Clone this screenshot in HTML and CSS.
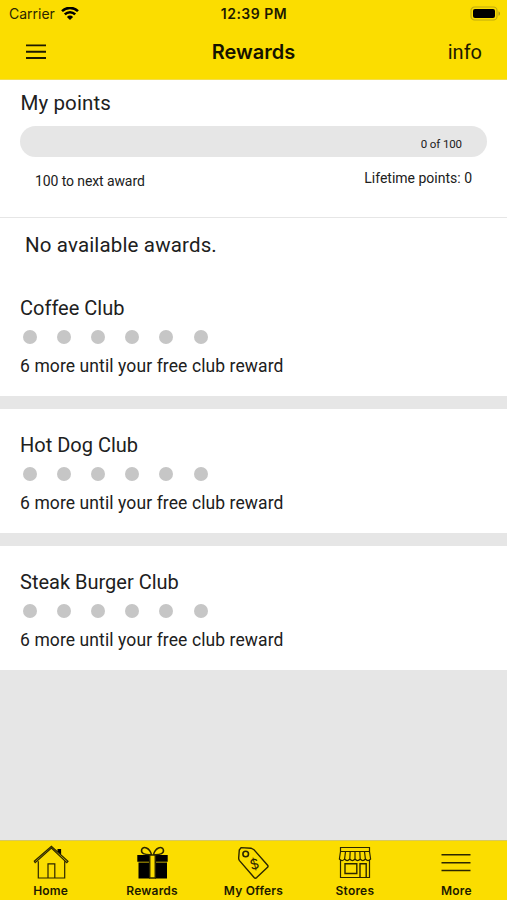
FILE: index.html
```html
<!DOCTYPE html>
<html lang="en">

<head>
    <meta charset="UTF-8">
    <meta name="viewport" content="width=device-width, initial-scale=1.0">
    <title>Rewards</title>
    <link rel="stylesheet" href="styles.css">
</head>

<body>

    <header class="header">
        <div class="status-bar">
            <div class="carrier">
                <span>Carrier</span>
                <svg width="18" height="14" viewBox="0 0 18 14">
                    <path d="M1 4.2a11.3 11.3 0 0 1 16 0M3.8 7.4a7.3 7.3 0 0 1 10.4 0" fill="none" stroke="#000" stroke-width="2.5" />
                    <path d="M9 13.1 5.9 9.9a4.4 4.4 0 0 1 6.2 0z" />
                </svg>
            </div>
            <span class="time">12:39 PM</span>
            <svg class="battery" width="31" height="15" viewBox="0 0 31 15">
                <rect x="1" y="1" width="26" height="13" rx="3.6" fill="none" stroke="#c0ac10" stroke-width="1.2" />
                <rect x="3" y="3" width="22" height="9" rx="2" />
                <path d="M28.5 5.2c2 .8 2 3.8 0 4.6z" fill="#a99a18" />
            </svg>
        </div>
        <div class="nav-bar">
            <svg class="menu" width="22" height="16" viewBox="0 0 22 16">
                <path d="M1 1.4h20M1 7.8h20M1 14h20" stroke="#1d1a00" stroke-width="1.9" />
            </svg>
            <h1 class="title">Rewards</h1>
            <a class="info">info</a>
        </div>
    </header>

    <main class="content">
        <section class="points">
            <h2 class="heading points-heading">My points</h2>
            <div class="progress"><span class="progress-text">0 of 100</span></div>
            <div class="points-info">
                <p class="next-award">100 to next award</p>
                <p class="lifetime">Lifetime points: 0</p>
            </div>
        </section>

        <section class="awards">
            <p class="no-awards">No available awards.</p>
        </section>

        <section class="club">
            <h2 class="heading">Coffee Club</h2>
            <div class="dots"><span></span><span></span><span></span><span></span><span></span><span></span></div>
            <p class="remaining">6 more until your free club reward</p>
        </section>

        <section class="club">
            <h2 class="heading">Hot Dog Club</h2>
            <div class="dots"><span></span><span></span><span></span><span></span><span></span><span></span></div>
            <p class="remaining">6 more until your free club reward</p>
        </section>

        <section class="club">
            <h2 class="heading">Steak Burger Club</h2>
            <div class="dots"><span></span><span></span><span></span><span></span><span></span><span></span></div>
            <p class="remaining">6 more until your free club reward</p>
        </section>
    </main>

    <nav class="tab-bar">
        <a class="tab">
            <svg width="36" height="36" viewBox="0 0 36 36">
                <path d="M5.3 16.2V33h26.4V16.2M15 32.5V18.8h6.8v13.7M2.2 17.6 1.3 16.2 18.4 1.2 35 16.2l-1.2 1.5L18.4 3z" />
                <path class="solid" d="M24.5 4h3.6v5.6l-3.6-3.2z" />
            </svg>
            <span>Home</span>
        </a>
        <a class="tab">
            <svg width="36" height="36" viewBox="0 0 36 36">
                <path class="solid" d="M3.3 10h12.4v6.7H3.3zM21.3 10h12.4v6.7H21.3zM4.5 17.6h11.2v15.8H4.5zM21.3 17.6H33v15.8H21.3z" />
                <path d="M15.7 10h5.6v23h-5.6zM17.5 9.6C10.3 10 6.5 8.3 7.7 4.6c1.5-4 8-1.8 9.8 5zM19.5 9.6c7.2.4 11-1.3 9.8-5-1.5-4-8-1.8-9.8 5z" stroke-width="1.5" />
            </svg>
            <span>Rewards</span>
        </a>
        <a class="tab">
            <svg width="36" height="36" viewBox="0 0 36 36">
                <path d="M4.3 5 6.1 2.6 16 3.2l3 1.5 13.6 15.5q1 1.2-.3 2.4L21.7 32.6q-1.4 1.2-2.6-.1L4.5 15.6q-1-1.3-.8-3z" stroke-width="1.4" />
                <circle cx="10.7" cy="9" r="2.8" stroke-width="1.6" />
                <text x="19.3" y="24" transform="rotate(-14 19.3 19)">$</text>
            </svg>
            <span>My Offers</span>
        </a>
        <a class="tab">
            <svg width="36" height="36" viewBox="0 0 36 36">
                <path d="M3.5 2.5h29v4h-29zM3.5 6.5 2.4 14q2.7 3.2 5.2 0 2.6 3.2 5.2 0 2.6 3.2 5.2 0 2.6 3.2 5.2 0 2.6 3.2 5.2 0 2.6 3.2 5.2 0L32.5 6.5M8.5 6.5 7.6 14M13.2 6.5l-.4 7.5M18 6.5V14M22.8 6.5l.4 7.5M27.5 6.5l.9 7.5M3.5 15.5v17h29v-17" />
                <path d="M8 18.7h11.8v9.8H8zM23 32.5V18.7h6.2v13.8" stroke-width="1.4" />
            </svg>
            <span>Stores</span>
        </a>
        <a class="tab">
            <svg width="36" height="36" viewBox="0 0 36 36">
                <path d="M3.5 9.7h29M3.5 17.7h29M3.5 25.5h29" stroke-width="1.5" />
            </svg>
            <span>More</span>
        </a>
    </nav>

</body>

</html>
```
FILE: styles.css
```css
* {
    box-sizing: border-box;
}

body {
    margin: 0;
    height: 100vh;
    display: flex;
    flex-direction: column;
    font-family: Roboto, sans-serif;
    color: #202020;
    background-color: #e6e6e6;
    overflow: hidden;
}

h1,
h2,
p {
    margin: 0;
    font-weight: normal;
    white-space: nowrap;
}

svg {
    display: block;
}

.header {
    height: 80px;
    background-color: #fbdd00;
    border-bottom: 1px solid #f3dd4d;
    font-family: Inter, sans-serif;
}

.status-bar {
    height: 27px;
    padding: 0 6px 0 9px;
    display: grid;
    grid-template-columns: 1fr auto 1fr;
    align-items: center;
    font-size: 14px;
}

.carrier {
    display: flex;
    align-items: center;
    gap: 6px;
    color: #2b2600;
}

.time {
    margin-right: 2px;
    font-weight: 600;
    letter-spacing: 0.5px;
    color: #1d1a00;
}

.battery {
    justify-self: end;
}

.nav-bar {
    height: 50px;
    padding: 0 25px;
    display: grid;
    grid-template-columns: 1fr auto 1fr;
    align-items: center;
}

.title {
    font-size: 20px;
    font-weight: 600;
    color: #141200;
}

.info {
    justify-self: end;
    font-family: Roboto, sans-serif;
    font-size: 20px;
    color: #1d1a00;
}

.content {
    flex: 1;
}

.heading {
    font-size: 20px;
    line-height: 24px;
}

.points {
    height: 138px;
    padding: 11px 20px 0;
    background-color: #fff;
    border-bottom: 1px solid #e6e6e6;
}

.points-heading {
    padding-left: 0.5px;
    font-size: 20.5px;
    letter-spacing: 0.1px;
}

.progress {
    height: 31px;
    margin-top: 11px;
    padding: 5px 25px 0 0;
    border-radius: 16px;
    background-color: #e6e6e6;
    display: flex;
    align-items: center;
    justify-content: flex-end;
}

.progress-text {
    font-size: 11.5px;
    letter-spacing: -0.1px;
}

.points-info {
    padding: 12px 15px 0;
    display: flex;
    justify-content: space-between;
    font-size: 14px;
    line-height: 18px;
}

.next-award {
    padding-top: 3px;
    letter-spacing: -0.1px;
}

.awards {
    height: 54px;
    padding: 15px 25px 0;
    background-color: #fff;
}

.no-awards {
    font-size: 20.5px;
    line-height: 24px;
    letter-spacing: 0.15px;
}

.club {
    height: 124px;
    padding: 24px 20px 0;
    margin-bottom: 13px;
    background-color: #fff;
}

.dots {
    display: flex;
    gap: 20.2px;
    padding: 10px 2.6px 0;
}

.dots span {
    width: 14px;
    height: 14px;
    border-radius: 50%;
    background-color: #c6c6c6;
}

.remaining {
    margin-top: 11px;
    font-size: 17.5px;
    line-height: 22px;
    letter-spacing: 0.1px;
}

.tab-bar {
    height: 60px;
    padding-top: 4px;
    display: grid;
    grid-template-columns: repeat(5, 1fr);
    background-color: #fbdd00;
    border-top: 1px solid #d8c95f;
    font-family: Inter, sans-serif;
}

.tab {
    display: flex;
    flex-direction: column;
    align-items: center;
    font-size: 12px;
    line-height: 16px;
    font-weight: 600;
    letter-spacing: 0.2px;
    color: #1d1a00;
}

.tab svg {
    margin-bottom: 2px;
    fill: none;
    stroke: #2b2600;
    stroke-width: 1.2;
}

.tab .solid {
    fill: #000;
    stroke: none;
}

.tab text {
    font-family: Inter, sans-serif;
    font-size: 14px;
    font-weight: 400;
    letter-spacing: 0;
    text-anchor: middle;
    fill: #2b2600;
    stroke: none;
}
```
